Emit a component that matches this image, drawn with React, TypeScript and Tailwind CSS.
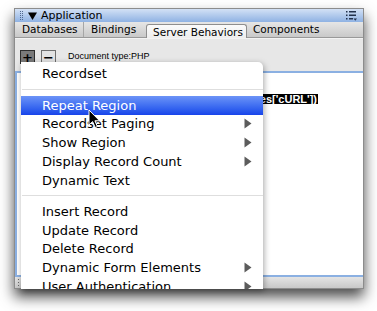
import type { ReactNode } from "react";

const sans = "font-['DejaVu_Sans',sans-serif]";

function Arrow() {
  return (
    <svg width="8" height="11" viewBox="0 0 8 11" className="shrink-0">
      <path d="M0.5 0.5L7.5 5.5L0.5 10.5Z" fill="#5c5c5c" />
    </svg>
  );
}

function Item({ label, sub, active }: { label: string; sub?: boolean; active?: boolean }) {
  return (
    <div
      className={
        "h-[18.75px] flex items-center justify-between pl-[21px] pr-[11px] text-[13px] leading-none " +
        (active ? "bg-gradient-to-b from-[#6c93f7] to-[#1843ea] text-white" : "text-black")
      }
    >
      <span>{label}</span>
      {sub && <Arrow />}
    </div>
  );
}

function Separator() {
  return (
    <div className="h-[12.5px] flex items-center pl-[1px]">
      <div className="h-px w-full bg-[#dedede]" />
    </div>
  );
}

function Tab({ children, className }: { children: ReactNode; className?: string }) {
  return <div className={"h-full flex items-center text-[10.5px] leading-none text-black " + (className ?? "")}>{children}</div>;
}

export default function App() {
  return (
    <div className={"h-[311px] w-[377px] bg-white pl-[14px] pt-[8px] " + sans}>
      <div className="relative w-[350px] h-[281px] flex flex-col border border-[#8c8c8c] bg-[#e7e7e7] shadow-[0_8px_13px_rgba(0,0,0,0.7)]">
        {/* title bar */}
        <div className="h-[13px] flex items-center pl-[5px] pr-[6px] bg-gradient-to-b from-[#d3e1f5] to-[#8fb2e3]">
          <svg width="4" height="10" viewBox="0 0 4 10" className="shrink-0">
            {[0, 2, 4, 6, 8].map((y) => (
              <g key={y} fill="#51688e">
                <rect x="0" y={y} width="1" height="1" />
                <rect x="2" y={y} width="1" height="1" />
              </g>
            ))}
          </svg>
          <svg width="9" height="8" viewBox="0 0 9 8" className="ml-[4px] shrink-0">
            <path d="M0 0.5H9L4.5 8Z" fill="#000" />
          </svg>
          <span className="ml-[4px] text-[11px] leading-none text-black">Application</span>
          <svg width="11" height="11" viewBox="0 0 11 11" className="ml-auto shrink-0">
            <g fill="#23324d">
              <rect x="0" y="1" width="1.5" height="1.5" />
              <rect x="3" y="1" width="7" height="1.5" />
              <rect x="0" y="4.5" width="1.5" height="1.5" />
              <rect x="3" y="4.5" width="7" height="1.5" />
              <rect x="0" y="8" width="1.5" height="1.5" />
              <rect x="3" y="8" width="4" height="1.5" />
              <path d="M7.5 8.5H11L9.25 10.8Z" />
            </g>
          </svg>
        </div>

        {/* tabs */}
        <div className="h-[16px] flex items-stretch bg-gradient-to-b from-[#e6e6e6] to-[#c9c9c9] border-b border-[#999999]">
          <Tab className="w-[69px] pl-[7px] border-r border-[#a6a6a6]">Databases</Tab>
          <Tab className="w-[62px] pl-[7px]">Bindings</Tab>
          <Tab className="w-[101px] pl-[6px] mt-[2px] -mb-px border border-b-0 border-[#8e8e8e] rounded-t-[3px] bg-gradient-to-b from-[#fbfbfb] to-[#ececec]">
            Server Behaviors
          </Tab>
          <Tab className="pl-[6px]">Components</Tab>
        </div>

        {/* toolbar */}
        <div className="h-[33px] flex items-start pl-[5px] pt-[11px] border-t border-[#f3f3f3]">
          <div className="w-[15px] h-[14px] flex items-center justify-center border border-[#2e2e2e] bg-[#7a7a7a] text-[13px] font-bold leading-none text-black">
            +
          </div>
          <div className="ml-[6px] w-[15px] h-[14px] flex items-center justify-center border border-[#6e6e6e] bg-[#e2e2e2] text-[13px] font-bold leading-none text-black">
            −
          </div>
          <span className="ml-[12px] mt-[2px] text-[9px] leading-none text-black font-['Liberation_Sans',sans-serif]">
            Document type:PHP
          </span>
        </div>

        {/* content */}
        <div className="flex-1 bg-white border-t-2 border-b-2 border-l-2 border-[#8bb0e2]">
          <div className="mt-[21px] w-[301px] flex justify-end">
            <span className="h-[10px] bg-black px-[1px] text-[11px] font-bold leading-[10px] text-white font-['Liberation_Sans',sans-serif]">
              $row_Resources['cURL'])
            </span>
          </div>
        </div>

        {/* status bar */}
        <div className="h-[11px] flex items-center pl-[3px] bg-gradient-to-b from-[#e4e4e4] to-[#c8c8c8]">
          <svg width="2" height="7" viewBox="0 0 2 7">
            <g fill="#6a6a6a">
              <rect x="0" y="0" width="1" height="1" />
              <rect x="0" y="3" width="1" height="1" />
              <rect x="0" y="6" width="1" height="1" />
            </g>
          </svg>
        </div>

        {/* popup menu */}
        <div className="absolute left-[6px] top-[53px] w-[242px] h-[227px] overflow-hidden bg-white rounded-tr-[5px] shadow-[1px_2px_6px_rgba(0,0,0,0.35)] pt-[2.5px]">
          <Item label="Recordset" />
          <Separator />
          <Item label="Repeat Region" active />
          <Item label="Recordset Paging" sub />
          <Item label="Show Region" sub />
          <Item label="Display Record Count" sub />
          <Item label="Dynamic Text" />
          <Separator />
          <Item label="Insert Record" />
          <Item label="Update Record" />
          <Item label="Delete Record" />
          <Item label="Dynamic Form Elements" sub />
          <Item label="User Authentication" sub />
        </div>

        {/* mouse pointer */}
        <svg width="13" height="20" viewBox="0 0 13 20" className="absolute left-[73px] top-[100px]">
          <path d="M1 1V16L4.6 12.6L7.2 18.5L9.4 17.5L6.9 11.8H11.6Z" fill="#000" stroke="#fff" strokeWidth="1" strokeLinejoin="round" />
        </svg>
      </div>
    </div>
  );
}
